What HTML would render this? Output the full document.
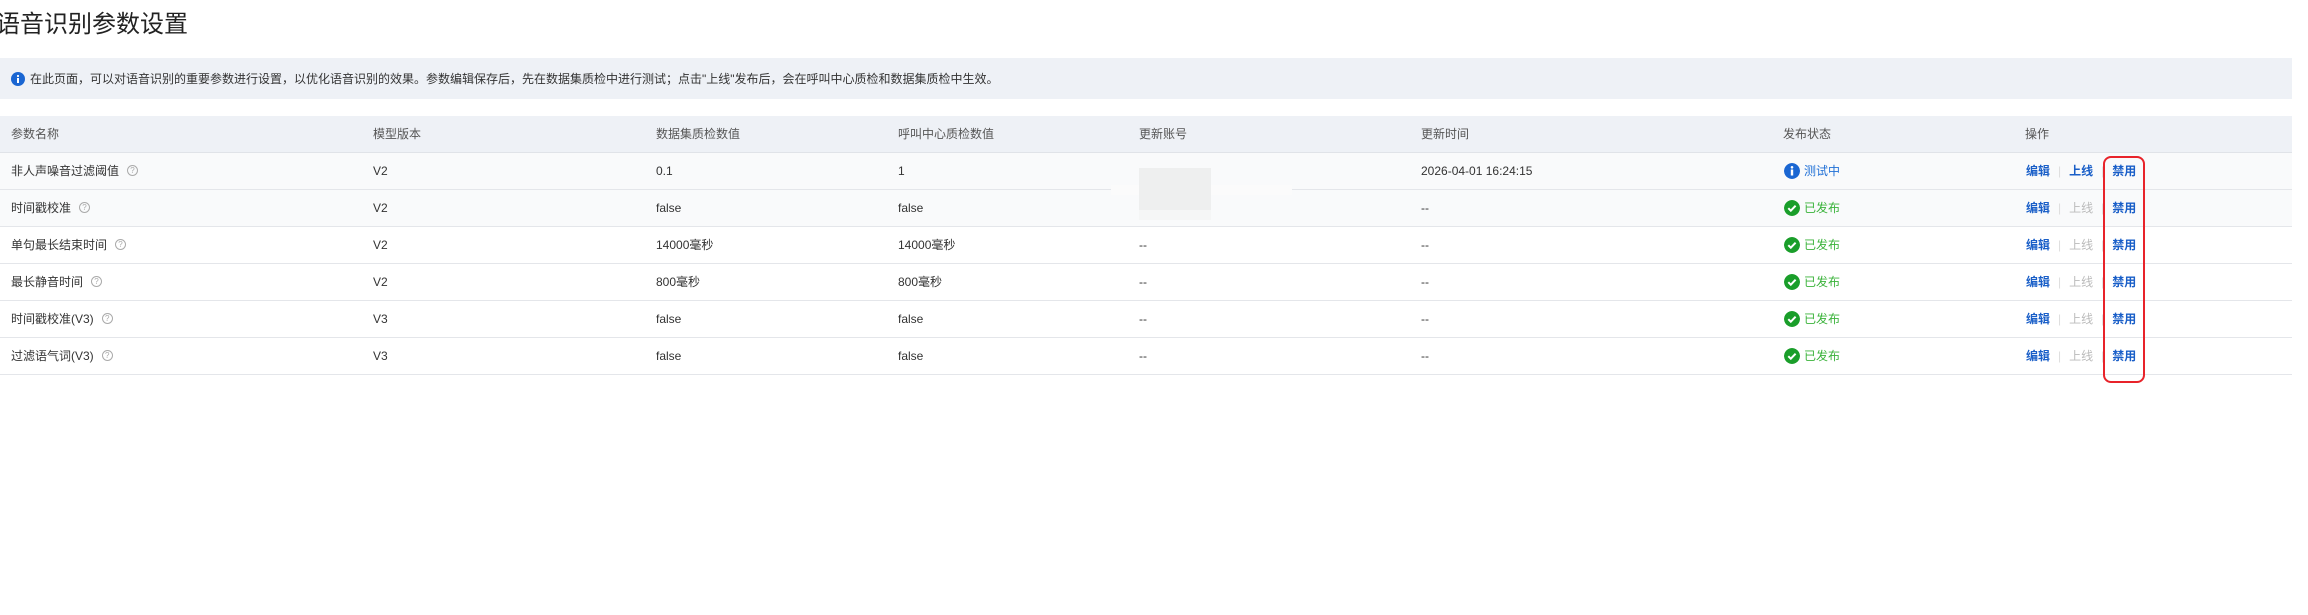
<!DOCTYPE html>
<html><head><meta charset="utf-8"><style>
*{margin:0;padding:0;box-sizing:border-box}
body{width:2308px;height:615px;background:#fff;position:relative;overflow:hidden;font-family:"Liberation Sans","Noto Sans CJK SC",sans-serif;color:#333;font-size:12px}
.a{position:absolute;white-space:nowrap}
.row{position:absolute;left:0;width:2292px;height:37px;border-bottom:1px solid #e4e6ea}
.c{position:absolute;top:0;line-height:36px;white-space:nowrap}
.q{display:inline-block;width:11px;height:11px;border:1px solid #aaa;border-radius:50%;font-size:8px;line-height:9px;text-align:center;color:#aaa;margin-left:8px;vertical-align:middle;position:relative;top:-1px}
.ic{display:inline-block;width:16px;height:16px;border-radius:50%;vertical-align:middle;position:relative;top:-1px;margin-right:4px}
.g{color:#3bb33b}.b{color:#1f6fd6}
.act{font-weight:bold;color:#1a5fc8}
.dis{color:#bbb}
.sep{color:#ddd;margin:0 8px}
</style></head><body>
<div class="a" style="left:-4px;top:9px;font-size:24px;color:#222;line-height:32px">语音识别参数设置</div>
<div class="a" style="left:0;top:58px;width:2292px;height:41px;background:#eef1f6"></div>
<svg class="a" style="left:11px;top:72px" width="14" height="14" viewBox="0 0 14 14"><circle cx="7" cy="7" r="7" fill="#1a66d2"/><rect x="6" y="6" width="2" height="5" fill="#fff"/><circle cx="7" cy="4" r="1.1" fill="#fff"/></svg>
<div class="a" style="left:30px;top:70px;line-height:18px;color:#333">在此页面，可以对语音识别的重要参数进行设置，以优化语音识别的效果。参数编辑保存后，先在数据集质检中进行测试；点击"上线"发布后，会在呼叫中心质检和数据集质检中生效。</div>
<div class="a" style="left:0;top:116px;width:2292px;height:37px;background:#eef1f6;border-bottom:1px solid #e0e3e8"></div>
<div class="a" style="top:116px;line-height:37px;left:11px;color:#555">参数名称</div>
<div class="a" style="top:116px;line-height:37px;left:373px;color:#555">模型版本</div>
<div class="a" style="top:116px;line-height:37px;left:656px;color:#555">数据集质检数值</div>
<div class="a" style="top:116px;line-height:37px;left:898px;color:#555">呼叫中心质检数值</div>
<div class="a" style="top:116px;line-height:37px;left:1139px;color:#555">更新账号</div>
<div class="a" style="top:116px;line-height:37px;left:1421px;color:#555">更新时间</div>
<div class="a" style="top:116px;line-height:37px;left:1783px;color:#555">发布状态</div>
<div class="a" style="top:116px;line-height:37px;left:2025px;color:#555">操作</div>

<div class="row" style="top:153px;background:#f9fafb">
<div class="c" style="left:11px">非人声噪音过滤阈值<span class="q">?</span></div><div class="c" style="left:373px">V2</div><div class="c" style="left:656px">0.1</div><div class="c" style="left:898px">1</div><div class="c" style="left:1421px">2026-04-01 16:24:15</div>
<div class="c b" style="left:1784px"><svg class="ic" viewBox="0 0 16 16"><circle cx="8" cy="8" r="8" fill="#1a66d2"/><rect x="6.8" y="6.5" width="2.4" height="6" fill="#fff"/><circle cx="8" cy="4.3" r="1.3" fill="#fff"/></svg>测试中</div>
<div class="c" style="left:2026px"><span class="act">编辑</span><span class="sep">|</span><span class="act">上线</span><span class="sep">|</span><span class="act">禁用</span></div>
</div>
<div class="row" style="top:190px;background:#f9fafb">
<div class="c" style="left:11px">时间戳校准<span class="q">?</span></div><div class="c" style="left:373px">V2</div><div class="c" style="left:656px">false</div><div class="c" style="left:898px">false</div><div class="c" style="left:1421px">--</div>
<div class="c g" style="left:1784px"><svg class="ic" viewBox="0 0 16 16"><circle cx="8" cy="8" r="8" fill="#1a9e2a"/><path d="M4.3 8.2l2.5 2.5 4.8-5" stroke="#fff" stroke-width="2" fill="none"/></svg>已发布</div>
<div class="c" style="left:2026px"><span class="act">编辑</span><span class="sep">|</span><span class="dis">上线</span><span class="sep">|</span><span class="act">禁用</span></div>
</div>
<div class="row" style="top:227px">
<div class="c" style="left:11px">单句最长结束时间<span class="q">?</span></div><div class="c" style="left:373px">V2</div><div class="c" style="left:656px">14000毫秒</div><div class="c" style="left:898px">14000毫秒</div><div class="c" style="left:1139px">--</div><div class="c" style="left:1421px">--</div>
<div class="c g" style="left:1784px"><svg class="ic" viewBox="0 0 16 16"><circle cx="8" cy="8" r="8" fill="#1a9e2a"/><path d="M4.3 8.2l2.5 2.5 4.8-5" stroke="#fff" stroke-width="2" fill="none"/></svg>已发布</div>
<div class="c" style="left:2026px"><span class="act">编辑</span><span class="sep">|</span><span class="dis">上线</span><span class="sep">|</span><span class="act">禁用</span></div>
</div>
<div class="row" style="top:264px">
<div class="c" style="left:11px">最长静音时间<span class="q">?</span></div><div class="c" style="left:373px">V2</div><div class="c" style="left:656px">800毫秒</div><div class="c" style="left:898px">800毫秒</div><div class="c" style="left:1139px">--</div><div class="c" style="left:1421px">--</div>
<div class="c g" style="left:1784px"><svg class="ic" viewBox="0 0 16 16"><circle cx="8" cy="8" r="8" fill="#1a9e2a"/><path d="M4.3 8.2l2.5 2.5 4.8-5" stroke="#fff" stroke-width="2" fill="none"/></svg>已发布</div>
<div class="c" style="left:2026px"><span class="act">编辑</span><span class="sep">|</span><span class="dis">上线</span><span class="sep">|</span><span class="act">禁用</span></div>
</div>
<div class="row" style="top:301px">
<div class="c" style="left:11px">时间戳校准(V3)<span class="q">?</span></div><div class="c" style="left:373px">V3</div><div class="c" style="left:656px">false</div><div class="c" style="left:898px">false</div><div class="c" style="left:1139px">--</div><div class="c" style="left:1421px">--</div>
<div class="c g" style="left:1784px"><svg class="ic" viewBox="0 0 16 16"><circle cx="8" cy="8" r="8" fill="#1a9e2a"/><path d="M4.3 8.2l2.5 2.5 4.8-5" stroke="#fff" stroke-width="2" fill="none"/></svg>已发布</div>
<div class="c" style="left:2026px"><span class="act">编辑</span><span class="sep">|</span><span class="dis">上线</span><span class="sep">|</span><span class="act">禁用</span></div>
</div>
<div class="row" style="top:338px">
<div class="c" style="left:11px">过滤语气词(V3)<span class="q">?</span></div><div class="c" style="left:373px">V3</div><div class="c" style="left:656px">false</div><div class="c" style="left:898px">false</div><div class="c" style="left:1139px">--</div><div class="c" style="left:1421px">--</div>
<div class="c g" style="left:1784px"><svg class="ic" viewBox="0 0 16 16"><circle cx="8" cy="8" r="8" fill="#1a9e2a"/><path d="M4.3 8.2l2.5 2.5 4.8-5" stroke="#fff" stroke-width="2" fill="none"/></svg>已发布</div>
<div class="c" style="left:2026px"><span class="act">编辑</span><span class="sep">|</span><span class="dis">上线</span><span class="sep">|</span><span class="act">禁用</span></div>
</div>
<div class="a" style="left:1111px;top:185px;width:181px;height:10px;background:#fbfbfb"></div>
<div class="a" style="left:1139px;top:168px;width:72px;height:52px;background:#eeefef"></div>
<div class="a" style="left:1139px;top:210px;width:72px;height:10px;background:#f5f6f6"></div>
<div class="a" style="left:2103px;top:156px;width:42px;height:227px;border:2px solid #e8232a;border-radius:8px"></div>
</body></html>
